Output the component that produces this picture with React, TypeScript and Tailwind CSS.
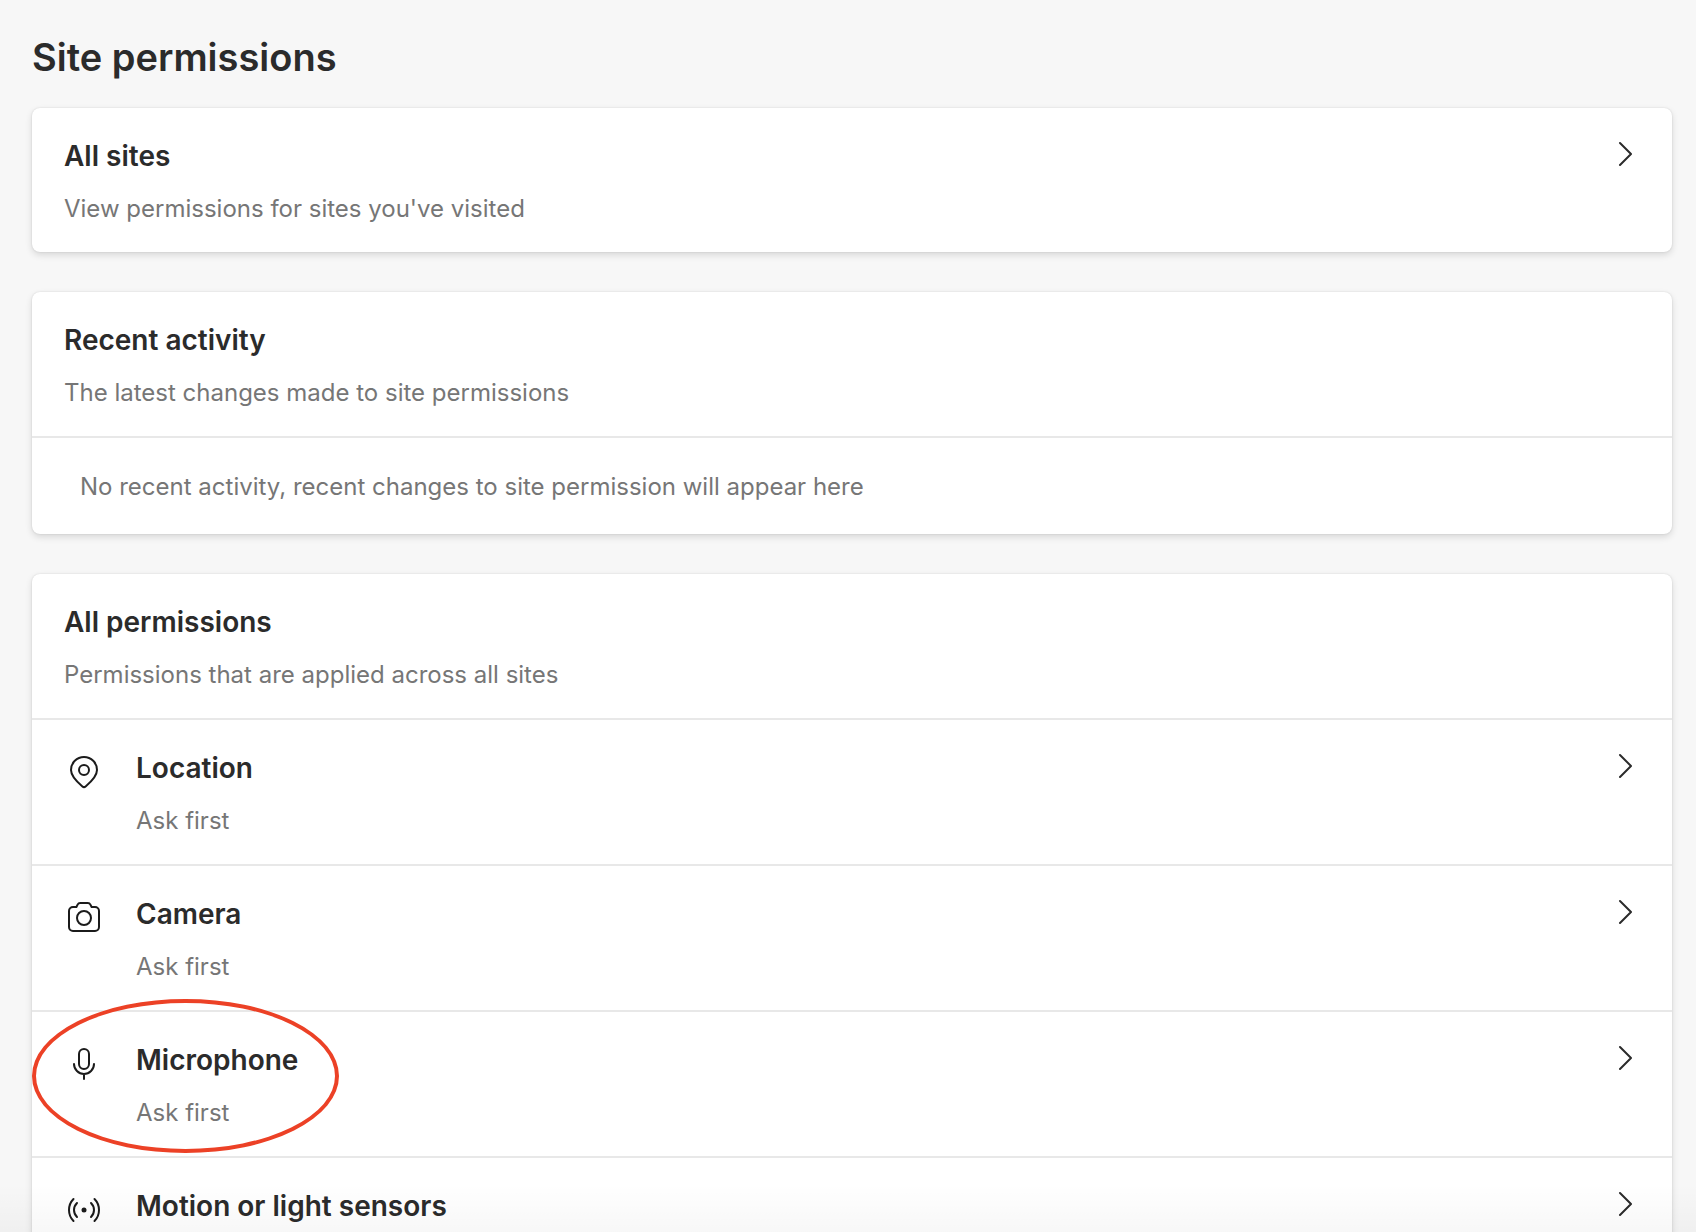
import type { ReactNode } from 'react';

interface Permission {
  name: string;
  status?: string;
  icon: ReactNode;
  highlighted?: boolean;
}

const permissions: Permission[] = [
  { name: 'Location', status: 'Ask first', icon: <LocationIcon /> },
  { name: 'Camera', status: 'Ask first', icon: <CameraIcon /> },
  { name: 'Microphone', status: 'Ask first', icon: <MicrophoneIcon />, highlighted: true },
  { name: 'Motion or light sensors', icon: <SensorsIcon /> },
];

export default function App() {
  return (
    <div className="relative h-screen overflow-hidden bg-[#f7f7f7] font-['Inter',sans-serif] text-[#2b2b2b]">
      <main className="pt-8 pr-6 pl-8">
        <h1 className="mb-[26px] text-[38px] leading-[50px] font-semibold">Site permissions</h1>

        <div className="flex flex-col gap-10">
          <Card>
            <a href="#all-sites" className="flex items-start justify-between pt-7 pr-10 pb-[26px] pl-8">
              <CardText title="All sites" description="View permissions for sites you've visited" />
              <Chevron />
            </a>
          </Card>

          <Card>
            <div className="px-8 pt-7 pb-[26px]">
              <CardText title="Recent activity" description="The latest changes made to site permissions" />
            </div>
            <p className="border-t-2 border-[#e8e8e8] px-12 pt-8 pb-[30px] text-2xl leading-[34px] text-[#767676]">
              No recent activity, recent changes to site permission will appear here
            </p>
          </Card>

          <Card>
            <div className="px-8 pt-7 pb-[26px]">
              <CardText title="All permissions" description="Permissions that are applied across all sites" />
            </div>
            <ul>
              {permissions.map((permission) => (
                <PermissionRow key={permission.name} permission={permission} />
              ))}
            </ul>
          </Card>
        </div>
      </main>

      {/* Bottom fade */}
      <div className="pointer-events-none absolute inset-x-0 bottom-0 h-12 bg-linear-to-b from-black/0 to-black/3" />
    </div>
  );
}

function Card({ children }: { children: ReactNode }) {
  return (
    <section className="rounded-lg bg-white shadow-[0_3px_7px_rgba(0,0,0,0.13),0_0_2px_rgba(0,0,0,0.13)]">
      {children}
    </section>
  );
}

function CardText({ title, description }: { title: string; description?: string }) {
  return (
    <div className="flex flex-col gap-4">
      <h2 className="text-[28px] leading-10 font-semibold">{title}</h2>
      {description && <p className="text-2xl leading-[34px] text-[#767676]">{description}</p>}
    </div>
  );
}

function PermissionRow({ permission }: { permission: Permission }) {
  return (
    <li className="relative border-t-2 border-[#e8e8e8]">
      <a href={`#${permission.name.toLowerCase()}`} className="flex items-start pt-7 pr-10 pb-[26px] pl-8">
        <span className="mt-1 mr-8">{permission.icon}</span>
        <CardText title={permission.name} description={permission.status} />
        <span className="ml-auto">
          <Chevron />
        </span>
      </a>
      {permission.highlighted && (
        <span className="pointer-events-none absolute -top-[13px] left-0 h-[154px] w-[307px] rounded-[50%] border-4 border-[#ec4126]" />
      )}
    </li>
  );
}

function Chevron() {
  return (
    <svg className="h-9 w-3.5" viewBox="0 0 14 36" fill="none" stroke="currentColor" strokeWidth="2" strokeLinecap="round" strokeLinejoin="round">
      <path d="M2 7L13 18L2 29" />
    </svg>
  );
}

function IconBase({ children }: { children: ReactNode }) {
  return (
    <svg className="size-10 text-[#1b1b1b]" viewBox="0 0 40 40" fill="none" stroke="currentColor" strokeWidth="2" strokeLinecap="round" strokeLinejoin="round">
      {children}
    </svg>
  );
}

function LocationIcon() {
  return (
    <IconBase>
      <path d="M20 5C12.8 5 7 10.8 7 18C7 24 12.5 29.5 18.4 34.4C19.3 35.2 20.7 35.2 21.6 34.4C27.5 29.5 33 24 33 18C33 10.8 27.2 5 20 5Z" />
      <circle cx="20" cy="18" r="5" />
    </IconBase>
  );
}

function CameraIcon() {
  return (
    <IconBase>
      <path d="M16.2 5H23.8C24.9 5 25.9 5.6 26.4 6.6L27.6 9H31C33.2 9 35 10.8 35 13V29C35 31.2 33.2 33 31 33H9C6.8 33 5 31.2 5 29V13C5 10.8 6.8 9 9 9H12.4L13.6 6.6C14.1 5.6 15.1 5 16.2 5Z" />
      <circle cx="20" cy="20" r="7" />
    </IconBase>
  );
}

function MicrophoneIcon() {
  return (
    <IconBase>
      <rect x="15" y="5" width="10" height="20" rx="5" />
      <path d="M10 20C10 25.5 14.5 30 20 30C25.5 30 30 25.5 30 20M20 30V35" />
    </IconBase>
  );
}

function SensorsIcon() {
  return (
    <IconBase>
      <circle cx="20" cy="20" r="2.5" fill="currentColor" stroke="none" />
      <path d="M9.5 9C3.5 15 3.5 25 9.5 31M13 13C9 17 9 23 13 27M27 13C31 17 31 23 27 27M30.5 9C36.5 15 36.5 25 30.5 31" />
    </IconBase>
  );
}
